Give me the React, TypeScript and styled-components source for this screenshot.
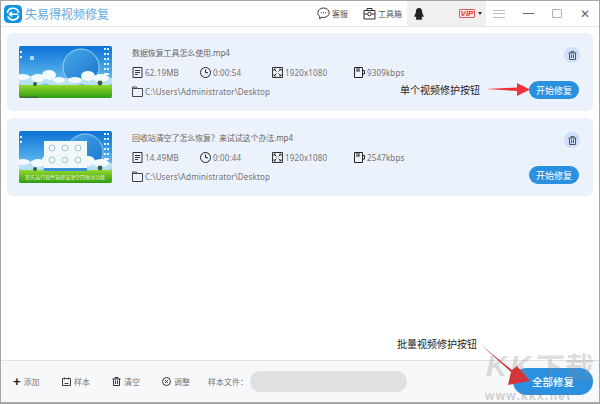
import * as React from "react";
import styled, { createGlobalStyle } from "styled-components";

const GlobalStyle = createGlobalStyle`
  html, body { margin: 0; padding: 0; background: #fff; }
  body { font-family: "Noto Sans", "Noto Sans CJK SC", sans-serif; }
  * { box-sizing: border-box; }
`;

type VideoEntry = {
  id: number;
  name: string;
  size: string;
  duration: string;
  bitrate: string;
};

const videos: VideoEntry[] = [
  { id: 1, name: "数据恢复工具怎么使用.mp4", size: "62.19MB", duration: "0:00:54", bitrate: "9309kbps" },
  { id: 2, name: "回收站清空了怎么恢复？来试试这个办法.mp4", size: "14.49MB", duration: "0:00:44", bitrate: "2547kbps" },
];

const Logo = () => (
  <svg width="18" height="18" viewBox="0 0 18 18">
    <rect width="18" height="18" rx="4.500" fill="#1093e0" />
    <path d="M3.300 8A5.800 5.800 0 0 1 14.700 8" stroke="#fff" strokeWidth="1.700" fill="none" />
    <path d="M14.700 10.500A5.800 5.800 0 0 1 3.800 11.500" stroke="#fff" strokeWidth="1.700" fill="none" />
    <path d="M14 9.200H5.500M8 6.800 5.500 9.200 8 11.500" stroke="#fff" strokeWidth="1.600" fill="none" />
  </svg>
);

const ChatIcon = () => (
  <svg width="13" height="13" viewBox="0 0 13 13" fill="none" stroke="#333" strokeWidth="1">
    <path d="M6.500 1C3.300 1 .8 3.100.8 5.800c0 1.500.8 2.800 2 3.600l-.2 2.200 2.300-1.300c.5.100 1 .2 1.600.2 3.200 0 5.700-2.100 5.700-4.700S9.700 1 6.500 1z" />
    <path d="M3.800 5.800h1M6 5.800h1M8.200 5.800h1" strokeWidth="1.100" />
  </svg>
);

const ToolboxIcon = () => (
  <svg width="13" height="13" viewBox="0 0 13 13" fill="none" stroke="#333" strokeWidth="1">
    <path d="M1 3.500h11v8.500H1zM4 3.500V1.500h5v2M1 7h3.500M8.500 7H12" />
    <circle cx="6.500" cy="7" r="1.800" />
  </svg>
);

const QQIcon = () => (
  <svg width="10" height="12" viewBox="0 0 10 12">
    <path d="M5 0C2.900 0 1.900 1.700 1.900 3.500v1C1.100 6 .2 7.500.5 9c.3.500.9-.2 1.200-.8.2.900.6 1.500 1 1.900-.6.300-1 .7-.9 1.100.2.600 2 .700 3.200.300 1.200.400 3 .300 3.200-.300.100-.400-.300-.800-.900-1.100.400-.400.800-1 1-1.900.300.600.900 1.300 1.200.8.300-1.500-.6-3-1.400-4.500v-1C8.100 1.700 7.100 0 5 0z" fill="#222" />
  </svg>
);

const FileIcon = () => (
  <svg width="11" height="11" viewBox="0 0 11 11" fill="none" stroke="#333" strokeWidth="1">
    <path d="M1 .5h9v10H1zM3 3.500h5M3 5.500h5M3 7.500h3" />
  </svg>
);

const ClockIcon = () => (
  <svg width="11" height="11" viewBox="0 0 11 11" fill="none" stroke="#222" strokeWidth="1">
    <circle cx="5.500" cy="5.500" r="5" />
    <path d="M5.500 2.500v3.200h2.500" />
  </svg>
);

const ResolutionIcon = () => (
  <svg width="11" height="11" viewBox="0 0 11 11" fill="none" stroke="#333" strokeWidth="1">
    <path d="M.5.500h10v10H.5zM2 2l2.500 2.500M9 2 6.500 4.500M2 9l2.500-2.500M9 9 6.500 6.500" />
    <path d="M2 4V2h2M7 2h2v2M2 7v2h2M9 7v2H7" strokeWidth=".8" />
  </svg>
);

const BitrateIcon = () => (
  <svg width="11" height="11" viewBox="0 0 11 11" fill="none" stroke="#222" strokeWidth="1">
    <path d="M.5.500h8v10h-8zM5 .500V4.500l-1-1-1 1V.500M8.500 3.500h2M8.500 7h2M10.500 3.500V7" />
  </svg>
);

const FolderIcon = () => (
  <svg width="11" height="11" viewBox="0 0 11 11" fill="none" stroke="#444" strokeWidth="1">
    <path d="M.5 2.500V1h4l1 1.500h5v8H.5zM.5 2.500h5" />
  </svg>
);

const TrashIcon = ({ color = "#555", size = 9 }: { color?: string; size?: number }) => (
  <svg width={size} height={size} viewBox="0 0 9 9" fill="none" stroke={color} strokeWidth="1">
    <path d="M.5 2h8M3 2V.500h3V2M1.500 2v6.500h6V2M3.500 3.500v3.500M5.500 3.500v3.500" />
  </svg>
);

const Scenery = ({ id, moonX }: { id: string; moonX: number }) => (
  <>
    <defs>
      <linearGradient id={`${id}-sky`} x1="0" y1="0" x2="0" y2="1">
        <stop offset="0" stopColor="#0b72d6" />
        <stop offset="0.72" stopColor="#6cc4f2" />
      </linearGradient>
      <linearGradient id={`${id}-moon`} x1="0" y1="0" x2="1" y2="1">
        <stop offset="0" stopColor="#4aa8e8" />
        <stop offset="1" stopColor="#1673cc" />
      </linearGradient>
      <linearGradient id={`${id}-grass`} x1="0" y1="0" x2="0" y2="1">
        <stop offset="0" stopColor="#93d82e" />
        <stop offset="1" stopColor="#2f9c12" />
      </linearGradient>
      <filter id={`${id}-soft`} x="-5%" y="-5%" width="110%" height="110%">
        <feGaussianBlur stdDeviation="0.7" />
      </filter>
    </defs>
    <rect width="93" height="52" fill={`url(#${id}-sky)`} />
    <g filter={`url(#${id}-soft)`}>
      <circle cx={moonX} cy="21" r="18" fill={`url(#${id}-moon)`} stroke="#cfeafa" strokeWidth="0.7" />
      <g fill="#b9e0f5">
        <ellipse cx="12" cy="35" rx="16" ry="5" />
        <ellipse cx="45" cy="36" rx="20" ry="4" />
        <ellipse cx="78" cy="35" rx="18" ry="5" />
      </g>
      <g fill="#f2fafd">
        <ellipse cx="4" cy="31" rx="7" ry="3" />
        <ellipse cx="19" cy="32" rx="7" ry="4" />
        <ellipse cx="30" cy="29" rx="7" ry="5" />
        <ellipse cx="40" cy="34" rx="6" ry="3" />
        <ellipse cx="56" cy="34" rx="7" ry="3" />
        <ellipse cx="69" cy="30" rx="7" ry="5" />
        <ellipse cx="82" cy="32" rx="8" ry="4" />
      </g>
      <rect y="39" width="93" height="13" fill={`url(#${id}-grass)`} />
      <circle cx="16" cy="38" r="2" fill="#37613f" />
      <circle cx="81" cy="37" r="2.400" fill="#37613f" />
      <path d="M85 2h2v2h-2zM88 2h2v2h-2zM85 7h2v2h-2zM88 7h2v2h-2zM85 12h2v2h-2zM88 12h2v2h-2zM85 17h2v2h-2zM88 17h2v2h-2zM85 22h2v2h-2zM88 22h2v2h-2zM85 27h5v2h-5zM1 5h2v2H1zM1 10h2v2H1z" fill="#eef7fd" />
    </g>
  </>
);

const DesktopPicture = () => (
  <svg width="93" height="52" viewBox="0 0 93 52">
    <Scenery id="desk" moonX={62} />
    <rect x="11" y="10" width="4" height="4" fill="#cfe4f2" opacity="0.8" />
    <rect x="1" y="50.500" width="18" height="1.500" fill="#3c6a38" />
  </svg>
);

const TutorialPicture = () => (
  <svg width="93" height="52" viewBox="0 0 93 52">
    <Scenery id="tutorial" moonX={66} />
    <rect x="25" y="10" width="43" height="30" fill="#f3f8fb" />
    <rect x="25" y="37" width="43" height="3" fill="#3f8fd6" />
    <g fill="none" stroke="#8fb6cf" strokeWidth="0.8">
      <circle cx="33" cy="17" r="3" />
      <circle cx="46" cy="17" r="3" />
      <circle cx="59" cy="17" r="3" />
      <circle cx="33" cy="29" r="3" />
      <circle cx="46" cy="29" r="3" />
      <circle cx="59" cy="29" r="3" />
    </g>
    <text x="6" y="48" fontSize="5" fill="#f4f4c8" textLength="80" fontFamily="Noto Sans CJK SC, sans-serif">
      首先运行软件选择误清空回收站功能
    </text>
  </svg>
);

const App = () => (
  <Window>
    <GlobalStyle />
    <TitleBar>
      <Brand>
        <Logo />
        <AppName>失易得视频修复</AppName>
      </Brand>
      <TitleLink><ChatIcon />客服</TitleLink>
      <TitleLink><ToolboxIcon />工具箱</TitleLink>
      <AccountArea>
        <QQIcon />
        <VipBadge>VIP</VipBadge>
        <Caret />
      </AccountArea>
      <WindowControls>
        <MenuLines><span /><span /><span /></MenuLines>
        <MinimizeMark />
        <MaximizeMark />
        <CloseMark>✕</CloseMark>
      </WindowControls>
    </TitleBar>
    <VideoList>
      {videos.map((video, index) => (
        <VideoCard key={video.id}>
          <Thumbnail>{index === 0 ? <DesktopPicture /> : <TutorialPicture />}</Thumbnail>
          <VideoInfo>
            <VideoName>{video.name}</VideoName>
            <MetaRow>
              <MetaItem><FileIcon />{video.size}</MetaItem>
              <MetaItem><ClockIcon />{video.duration}</MetaItem>
              <MetaItem><ResolutionIcon />1920x1080</MetaItem>
              <MetaItem><BitrateIcon />{video.bitrate}</MetaItem>
            </MetaRow>
            <MetaItem><FolderIcon />C:\Users\Administrator\Desktop</MetaItem>
          </VideoInfo>
          <CardActions>
            <DeleteButton><TrashIcon /></DeleteButton>
            <StartButton>开始修复</StartButton>
          </CardActions>
        </VideoCard>
      ))}
    </VideoList>
    <BottomBar>
      <ToolButton $wide={49}><PlusMark>+</PlusMark>添加</ToolButton>
      <ToolButton $wide={50}>
        <svg width="9" height="9" viewBox="0 0 9 9" fill="none" stroke="#444"><path d="M.5 1.500h8v7h-8zM2.500.500v2M6.500.500v2M2.500 6.500h4" /></svg>
        样本
      </ToolButton>
      <ToolButton $wide={50}><TrashIcon color="#333" />清空</ToolButton>
      <ToolButton $wide={46}>
        <svg width="9" height="9" viewBox="0 0 9 9" fill="none" stroke="#333"><circle cx="4.500" cy="4.500" r="4" /><path d="M3 3l3 3M6 3 3 6" /></svg>
        调整
      </ToolButton>
      <SampleLabel>样本文件：</SampleLabel>
      <SampleInput />
      <RepairAllButton>全部修复</RepairAllButton>
    </BottomBar>

    <SingleNote>单个视频修护按钮</SingleNote>
    <NoteArrow width="46" height="16" viewBox="0 0 46 16" $left={484} $top={81}>
      <path d="M1 7 32 5.500 32 1 45 7.500 32 14 32 9z" fill="#f0333a" />
    </NoteArrow>
    <BatchNote>批量视频修护按钮</BatchNote>
    <Watermark>
      <WatermarkLatin>KK</WatermarkLatin>下载
    </Watermark>
    <NoteArrow width="50" height="46" viewBox="0 0 50 46" $left={480} $top={343}>
      <path d="M0 1 31 26 36 22 49 37 27 41 30 28z" fill="#d4343c" />
    </NoteArrow>
    <WatermarkUrl>www.kkx.net</WatermarkUrl>
  </Window>
);

export default App;

const Window = styled.div`
  position: relative;
  width: 600px;
  height: 404px;
  display: flex;
  flex-direction: column;
  overflow: hidden;
  background: #fff;
  border: 1px solid #a6a6a6;
  border-bottom-width: 2px;
`;

const TitleBar = styled.div`
  height: 26px;
  display: flex;
  align-items: center;
  flex-shrink: 0;
  border-bottom: 1px solid #e4e4e4;
`;

const Brand = styled.div`
  width: 316px;
  display: flex;
  align-items: center;
  gap: 3px;
  padding-left: 3px;
`;

const AppName = styled.span`
  font-size: 12px;
  color: #62a9e2;
  white-space: nowrap;
`;

const TitleLink = styled.div`
  display: flex;
  align-items: center;
  gap: 2px;
  margin-right: 15px;
  font-size: 8px;
  color: #555;
  white-space: nowrap;
  &:nth-of-type(3) { margin-right: 5px; }
`;

const AccountArea = styled.div`
  width: 79px;
  height: 25px;
  display: flex;
  align-items: center;
  background: #f0f0f0;
  padding-left: 7px;
`;

const VipBadge = styled.span`
  margin-left: 35px;
  width: 16px;
  height: 9px;
  display: flex;
  align-items: center;
  justify-content: center;
  font-family: "Liberation Sans", sans-serif;
  font-size: 8px;
  font-style: italic;
  font-weight: bold;
  color: #e23a3a;
  border: 1px solid #e45a5a;
  border-radius: 1px;
  background: #fde9e9;
`;

const Caret = styled.span`
  margin-left: 3px;
  border-left: 2.500px solid transparent;
  border-right: 2.500px solid transparent;
  border-top: 3px solid #333;
`;

const WindowControls = styled.div`
  flex: 1;
  display: flex;
  align-items: center;
  padding-left: 7px;
`;

const MenuLines = styled.div`
  width: 12px;
  display: flex;
  flex-direction: column;
  gap: 2.500px;
  span { height: 1px; background: #bcbcbc; }
`;

const MinimizeMark = styled.span`
  width: 11px;
  height: 1px;
  margin-left: 18px;
  background: #666;
`;

const MaximizeMark = styled.span`
  width: 10px;
  height: 9px;
  margin-left: 18px;
  border: 1px solid #b0b0b0;
  border-radius: 1px;
`;

const CloseMark = styled.span`
  margin-left: 18px;
  font-family: "DejaVu Sans", sans-serif;
  font-size: 12px;
  line-height: 14px;
  font-weight: bold;
  color: #666;
`;

const VideoList = styled.div`
  flex: 1;
  display: flex;
  flex-direction: column;
  gap: 7px;
  padding: 6px 6px 0;
`;

const VideoCard = styled.div`
  height: 78px;
  display: flex;
  align-items: center;
  padding: 0 14px 0 12px;
  border-radius: 6px;
  background: #ecf2fc;
`;

const Thumbnail = styled.div`
  width: 93px;
  height: 52px;
  flex-shrink: 0;
  overflow: hidden;
  border-radius: 2px;
  svg { display: block; }
`;

const VideoInfo = styled.div`
  flex: 1;
  display: flex;
  flex-direction: column;
  gap: 7px;
  margin-left: 20px;
`;

const VideoName = styled.div`
  height: 12px;
  margin-bottom: 1px;
  font-size: 8px;
  line-height: 12px;
  letter-spacing: -0.1px;
  color: #666;
  white-space: nowrap;
`;

const MetaRow = styled.div`
  display: grid;
  grid-template-columns: 68px 72px 82px auto;
`;

const MetaItem = styled.div`
  height: 12px;
  display: flex;
  align-items: center;
  gap: 2px;
  font-size: 8px;
  letter-spacing: 0.15px;
  color: #727272;
  white-space: nowrap;
`;

const CardActions = styled.div`
  height: 52px;
  display: flex;
  flex-direction: column;
  align-items: flex-end;
  justify-content: space-between;
  margin-top: 2px;
`;

const DeleteButton = styled.div`
  width: 16px;
  height: 16px;
  margin-right: -1px;
  display: flex;
  align-items: center;
  justify-content: center;
  border-radius: 50%;
  background: #cfe0fa;
`;

const StartButton = styled.button`
  width: 50px;
  height: 18px;
  padding: 0;
  border: none;
  border-radius: 9px;
  background: #2a90e0;
  color: #fff;
  font-family: inherit;
  font-size: 9px;
`;

const BottomBar = styled.div`
  height: 42px;
  display: flex;
  align-items: center;
  flex-shrink: 0;
  padding-left: 12px;
  background: #f7f8fa;
  border-top: 1px solid #e2e2e2;
`;

const ToolButton = styled.div<{ $wide: number }>`
  width: ${(p) => p.$wide}px;
  display: flex;
  align-items: center;
  gap: 3px;
  font-size: 8px;
  color: #777;
`;

const PlusMark = styled.span`
  font-family: "Liberation Sans", sans-serif;
  font-size: 13px;
  line-height: 10px;
  font-weight: bold;
  color: #222;
`;

const SampleLabel = styled.span`
  width: 42px;
  font-size: 8px;
  color: #777;
  white-space: nowrap;
`;

const SampleInput = styled.div`
  width: 157px;
  height: 21px;
  border-radius: 10px;
  background: #dfe0e2;
`;

const RepairAllButton = styled.button`
  width: 80px;
  height: 27px;
  margin-left: 106px;
  padding: 0;
  border: none;
  border-radius: 14px;
  background: #2a90e0;
  color: #fff;
  font-family: inherit;
  font-size: 10.500px;
  font-weight: 500;
`;

const SingleNote = styled.div`
  position: absolute;
  left: 399px;
  top: 82px;
  font-size: 10px;
  line-height: 14px;
  color: #222;
`;

const BatchNote = styled.div`
  position: absolute;
  left: 396px;
  top: 336px;
  font-size: 10px;
  line-height: 14px;
  color: #222;
`;

const NoteArrow = styled.svg<{ $left: number; $top: number }>`
  position: absolute;
  left: ${(p) => p.$left}px;
  top: ${(p) => p.$top}px;
`;

const Watermark = styled.div`
  position: absolute;
  left: 485px;
  top: 349px;
  display: flex;
  font-family: "Noto Sans CJK SC", sans-serif;
  font-size: 29px;
  line-height: 32px;
  font-weight: 700;
  color: rgba(140, 140, 140, 0.3);
  white-space: nowrap;
`;

const WatermarkLatin = styled.span`
  letter-spacing: 3px;
  margin-right: 2px;
  font-family: "Liberation Sans", sans-serif;
  font-style: italic;
`;

const WatermarkUrl = styled.div`
  position: absolute;
  left: 484px;
  top: 389px;
  font-family: "Liberation Sans", sans-serif;
  font-size: 12px;
  line-height: 12px;
  font-weight: 700;
  letter-spacing: 1.300px;
  color: rgba(120, 120, 120, 0.35);
`;
